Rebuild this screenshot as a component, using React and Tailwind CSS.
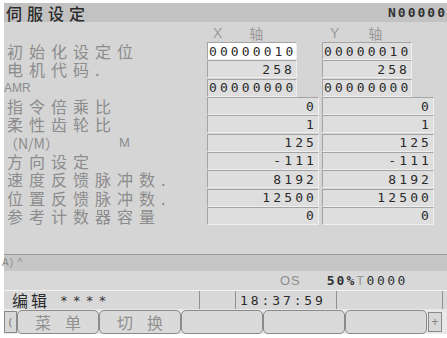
import React from "react";

const rows = [
  { label: "初始化设定位", x: "00000010", y: "00000010", wide: false, left: true, focus: true },
  { label: "电机代码.", x: "258", y: "258", wide: false },
  { label: "AMR", x: "00000000", y: "00000000", wide: false, left: true, small: true },
  { label: "指令倍乘比", x: "0", y: "0", wide: true },
  { label: "柔性齿轮比", x: "1", y: "1", wide: true },
  { label: "（N/M）", x: "125", y: "125", wide: true, nm: true },
  { label: "方向设定", x: "-111", y: "-111", wide: true },
  { label: "速度反馈脉冲数.", x: "8192", y: "8192", wide: true },
  { label: "位置反馈脉冲数.", x: "12500", y: "12500", wide: true },
  { label: "参考计数器容量", x: "0", y: "0", wide: true },
];

const cjk = { fontFamily: '"Noto Sans CJK SC", "Noto Sans", sans-serif' };
const mono = { fontFamily: '"DejaVu Sans Mono", "Liberation Mono", monospace' };
const sans = { fontFamily: '"Liberation Sans", Arial, sans-serif' };

function Box({ value, wide, left, focus }) {
  return (
    <div
      className={`h-[18px] flex items-center border-t border-l border-t-[#a4a4a4] border-l-[#a4a4a4] border-r border-b border-r-[#efefef] border-b-[#efefef] ${
        wide ? "w-[112px]" : "w-[90px]"
      } ${focus ? "bg-white" : "bg-[#dedede]"} ${left ? "justify-start pl-[1px]" : "justify-end pr-[1px]"}`}
    >
      <span style={mono} className="text-[13px] leading-none tracking-[3.1px] text-[#2a2a2a]">
        {value}
      </span>
    </div>
  );
}

function SoftKey({ children }) {
  return (
    <div className="w-[82px] h-[24px] rounded-[5px] border border-[#8a8a8a] bg-[#dadada] flex items-center justify-center">
      <span style={cjk} className="text-[16px] leading-none tracking-[14px] pl-[14px] text-[#909090]">
        {children}
      </span>
    </div>
  );
}

export default function App() {
  return (
    <div className="w-[447px] h-[338px] bg-white overflow-hidden pt-[3px] pl-[4px] flex flex-col">
      {/* title */}
      <div className="h-[19px] bg-[#c2c2c2] flex items-center justify-between pl-[2px]">
        <span style={cjk} className="text-[16px] leading-none tracking-[5px] font-medium text-[#2b2b2b]">
          伺服设定
        </span>
        <span style={mono} className="text-[13px] leading-none font-bold tracking-[2px] text-[#333]">
          N00000
        </span>
      </div>

      {/* main */}
      <div className="bg-[#d5d5d5] h-[232px] flex flex-col">
        <div className="h-[20px] flex items-end pb-[2px]">
          <div className="w-[203px]" />
          <div className="w-[115px] flex text-[#9a9a9a] text-[14px] leading-none" style={cjk}>
            <span className="ml-[6px]" style={sans}>X</span>
            <span className="ml-[27px]">轴</span>
          </div>
          <div className="flex text-[#9a9a9a] text-[14px] leading-none" style={cjk}>
            <span className="ml-[8px]" style={sans}>Y</span>
            <span className="ml-[29px]">轴</span>
          </div>
        </div>
        {rows.map((r, i) => (
          <div key={i} className="h-[18.3px] flex items-center">
            <div className="w-[203px] pl-[3px] flex items-center">
              {r.small ? (
                <span style={sans} className="text-[12px] leading-none text-[#8c8c8c] -ml-[3px]">
                  {r.label}
                </span>
              ) : r.nm ? (
                <>
                  <span style={cjk} className="text-[14px] leading-none text-[#8c8c8c] -ml-[3px]">
                    {r.label}
                  </span>
                  <span style={sans} className="text-[13px] leading-none text-[#8c8c8c] ml-[60px]">
                    M
                  </span>
                </>
              ) : (
                <span style={cjk} className="text-[16px] leading-none tracking-[6px] text-[#8c8c8c]">
                  {r.label}
                </span>
              )}
            </div>
            <div className="w-[115px]">
              <Box value={r.x} wide={r.wide} left={r.left} focus={r.focus} />
            </div>
            <Box value={r.y} wide={r.wide} left={r.left} />
          </div>
        ))}
      </div>

      {/* input bar */}
      <div className="h-[17px] bg-[#c6c6c6] border-t border-[#9c9c9c] flex items-center">
        <span style={sans} className="text-[10px] leading-none text-[#8a8a8a] tracking-[1px] -ml-[2px]">
          A) ^
        </span>
      </div>

      {/* state line */}
      <div className="h-[19px] bg-[#d8d8d8] flex items-center">
        <span style={sans} className="ml-[276px] text-[13px] leading-none tracking-[1px] text-[#8e8e8e]">
          OS
        </span>
        <span style={mono} className="ml-[26px] text-[13px] leading-none font-bold tracking-[2px] text-[#333]">
          50%
        </span>
        <span style={mono} className="text-[13px] leading-none tracking-[2.5px] text-[#333]">
          <span className="text-[#9a9a9a]">T</span>0000
        </span>
      </div>

      {/* status */}
      <div className="h-[19px] bg-[#d8d8d8] flex border-t border-[#f2f2f2]">
        <div className="w-[196px] border-r border-[#909090] flex items-center pl-[8px]">
          <span style={cjk} className="text-[16px] leading-none tracking-[3px] text-[#2b2b2b]">
            编辑
          </span>
          <span style={mono} className="ml-[10px] text-[13px] leading-none tracking-[5px] text-[#333]">
            ****
          </span>
        </div>
        <div className="w-[36px] border-r border-[#909090]" />
        <div className="w-[101px] border-r border-[#909090] flex items-center pl-[4px]">
          <span style={mono} className="text-[13px] leading-none tracking-[2.9px] text-[#2b2b2b]">
            18:37:59
          </span>
        </div>
        <div className="w-[106px] border-r border-[#909090]" />
      </div>

      {/* soft keys */}
      <div className="h-[25px] bg-[#e8e8e8] flex items-center">
        <div className="w-[13px] h-[22px] border border-[#8a8a8a] bg-[#d8d8d8] flex items-center justify-center text-[11px] text-[#777] leading-none">
          (
        </div>
        <SoftKey>菜单</SoftKey>
        <SoftKey>切换</SoftKey>
        <SoftKey />
        <SoftKey />
        <SoftKey />
        <div className="ml-[1px] w-[14px] h-[20px] border border-[#8a8a8a] bg-[#d8d8d8] flex items-center justify-center text-[13px] text-[#888] leading-none">
          +
        </div>
      </div>
    </div>
  );
}
